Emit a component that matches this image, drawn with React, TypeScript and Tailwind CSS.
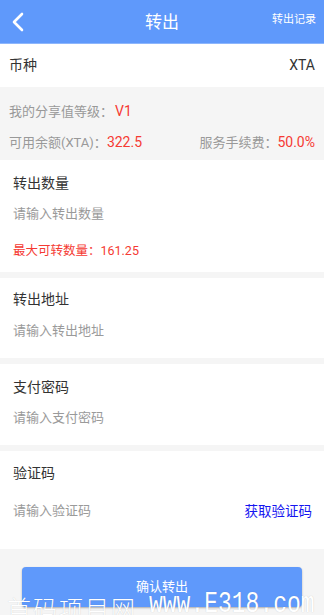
import React from "react";

const font = { fontFamily: "Roboto, 'Noto Sans CJK SC', sans-serif" };

function Field({
  title,
  placeholder,
  className,
  titleTop,
  phTop,
  extra,
  right,
}: {
  title: string;
  placeholder: string;
  className: string;
  titleTop: string;
  phTop: string;
  extra?: React.ReactNode;
  right?: React.ReactNode;
}) {
  return (
    <div className={`bg-white pl-[13px] pr-[12px] flex flex-col ${className}`}>
      <div className={`h-[20px] leading-[20px] text-[14px] text-[#333] ${titleTop}`}>{title}</div>
      <div className={`h-[20px] leading-[20px] text-[13px] flex justify-between items-center ${phTop}`}>
        <span className="text-[#9a9a9a]">{placeholder}</span>
        {right}
      </div>
      {extra}
    </div>
  );
}

export default function App() {
  return (
    <div className="w-[324px] h-[615px] overflow-hidden bg-[#f5f5f5] relative" style={font}>
      <div className="h-[44px] bg-[#5f99fb] border-b border-[#8db6fc] flex items-center justify-between relative">
        <svg className="ml-[11px]" width="14" height="20" viewBox="0 0 14 20">
          <path d="M11 2 L3 10 L11 18" fill="none" stroke="white" strokeWidth="2.6" strokeLinecap="round" strokeLinejoin="round" />
        </svg>
        <div className="absolute left-0 right-0 text-center text-white text-[17px] leading-[24px] pointer-events-none">转出</div>
        <div className="mr-[8px] text-white text-[11px] leading-[16px] -mt-[4px]">转出记录</div>
      </div>
      <div className="h-[43px] bg-white px-[9px] flex items-center justify-between text-[14px] text-[#333]">
        <span>币种</span>
        <span>XTA</span>
      </div>
      <div className="h-[73px] px-[9px] pt-[9px] flex flex-col text-[13px] text-[#999]">
        <div className="h-[31px] flex items-center">
          我的分享值等级：<span className="text-[#f53a33] ml-[2px] text-[14px]">V1</span>
        </div>
        <div className="h-[31px] flex items-center justify-between">
          <span>
            可用余额(XTA)：<span className="text-[#f53a33] text-[14px]">322.5</span>
          </span>
          <span>
            服务手续费：<span className="text-[#f53a33] text-[14px]">50.0%</span>
          </span>
        </div>
      </div>
      <Field
        title="转出数量"
        placeholder="请输入转出数量"
        className="h-[112px]"
        titleTop="mt-[13px]"
        phTop="mt-[11px]"
        extra={
          <div className="h-[20px] leading-[20px] mt-[17px] text-[12.5px] text-[#f53a33]">最大可转数量：161.25</div>
        }
      />
      <div className="h-[6px]" />
      <Field title="转出地址" placeholder="请输入转出地址" className="h-[80px]" titleTop="mt-[11px]" phTop="mt-[12px]" />
      <div className="h-[6px]" />
      <Field title="支付密码" placeholder="请输入支付密码" className="h-[81px]" titleTop="mt-[13px]" phTop="mt-[11px]" />
      <div className="h-[6px]" />
      <Field
        title="验证码"
        placeholder="请输入验证码"
        className="h-[98px]"
        titleTop="mt-[12px]"
        phTop="mt-[18px]"
        right={<span className="text-[#1515f0] text-[13.5px]">获取验证码</span>}
      />
      <div className="pt-[18px] px-[22px]">
        <div className="h-[40px] rounded-[4px] bg-[#5f99fb] shadow-[0_1px_2px_rgba(0,0,0,0.3)] flex items-center justify-center text-white text-[13px]">
          确认转出
        </div>
      </div>
      <div
        className="absolute left-[7px] top-[593px] flex items-end text-white whitespace-nowrap pointer-events-none"
        style={{ textShadow: "0 0 1px rgba(0,0,0,0.2)" }}
      >
        <span
          className="text-[24px] leading-[30px] tracking-[2px]"
          style={{ fontFamily: "'Noto Sans CJK SC', sans-serif", fontWeight: 300 }}
        >
          首码项目网
        </span>
        <span
          className="ml-[12px] inline-block text-[23px] leading-[30px] scale-y-[1.25] origin-bottom"
          style={{ fontFamily: "'Liberation Mono', monospace" }}
        >
          www.E318.com
        </span>
      </div>
    </div>
  );
}
